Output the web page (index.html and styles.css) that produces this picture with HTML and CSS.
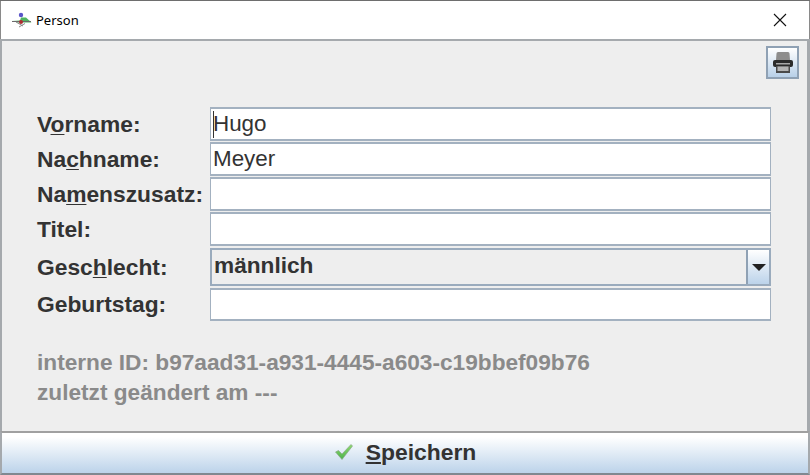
FILE: index.html
```html
<!DOCTYPE html>
<html lang="de">
<head>
<meta charset="utf-8">
<title>Person</title>
<link rel="stylesheet" href="styles.css">
</head>
<body>
<div class="window">
  <header class="titlebar">
    <svg class="app-icon" width="22" height="18" viewBox="0 0 22 18">
      <circle cx="10" cy="4" r="2.200" fill="#5a55c8"/>
      <path d="M1 10 L9 9.500 L10 6.500 L15 6.500 L20.500 11.500 L7 11.500 Z" fill="#4fb45f"/>
      <path d="M1 10.500 H20" stroke="#6a6a6a" stroke-width="1" fill="none"/>
      <path d="M5 11 L12 15 M8 16 L14 12.500" stroke="#8a8a8a" stroke-width="1" fill="none"/>
      <circle cx="10" cy="11" r="2" fill="#b02c30"/>
    </svg>
    <span class="title">Person</span>
    <svg class="close" width="14" height="14" viewBox="0 0 14 14">
      <path d="M1 1 L13 13 M13 1 L1 13" stroke="#111" stroke-width="1.100" fill="none"/>
    </svg>
  </header>
  <main class="content">
    <div class="toolbar">
      <button class="print" type="button" aria-label="Drucken">
        <svg class="print-icon" width="22" height="24" viewBox="0 0 22 24">
          <path d="M4.500 2.500 Q4.500 1 6 1 H16 Q17.500 1 17.500 2.500 L18 9 H4 Z" fill="#8d8d8d"/>
          <rect x="1" y="9" width="20" height="7" rx="2" fill="#2b2b2b"/>
          <rect x="4" y="12" width="14" height="1.500" fill="#a8a8a8"/>
          <path d="M4 15 H18 V22 H4 Z" fill="#4a4a4a"/>
          <rect x="5.500" y="15.500" width="11" height="4.500" fill="#b4b4b4"/>
        </svg>
      </button>
    </div>
    <form class="form">
      <div class="row r1">
        <label class="label">V<u>o</u>rname:</label>
        <div class="field caret-field"><span class="caret"></span>Hugo</div>
      </div>
      <div class="row r2">
        <label class="label">Na<u>c</u>hname:</label>
        <div class="field">Meyer</div>
      </div>
      <div class="row r3">
        <label class="label">Na<u>m</u>enszusatz:</label>
        <div class="field"></div>
      </div>
      <div class="row r4">
        <label class="label">Titel:</label>
        <div class="field"></div>
      </div>
      <div class="row r5">
        <label class="label">Gesc<u>h</u>lecht:</label>
        <div class="combo">
          <div class="combo-value">männlich</div>
          <div class="combo-button"><span class="arrow"></span></div>
        </div>
      </div>
      <div class="row r6">
        <label class="label">Geburtstag:</label>
        <div class="field"></div>
      </div>
    </form>
    <div class="info">
      <div>interne ID: b97aad31-a931-4445-a603-c19bbef09b76</div>
      <div>zuletzt geändert am ---</div>
    </div>
  </main>
  <button class="save" type="button">
    <svg width="20" height="18" viewBox="0 0 20 18">
      <defs>
        <linearGradient id="check" x1="0" y1="0" x2="0" y2="1">
          <stop offset="0" stop-color="#8fdc6c"/>
          <stop offset="1" stop-color="#4cb04c"/>
        </linearGradient>
      </defs>
      <path d="M1.500 9 L4.500 7.500 L8 11 L17 1.500 L18.500 3 L8 16.500 Z" fill="url(#check)" stroke="#8aa68a" stroke-width="0.700"/>
    </svg>
    <span><u>S</u>peichern</span>
  </button>
</div>
</body>
</html>
```
FILE: styles.css
```css
* { box-sizing: border-box; }
html, body { margin: 0; padding: 0; }
body {
  width: 810px;
  height: 475px;
  overflow: hidden;
  font-family: "Liberation Sans", Arial, sans-serif;
  background: #eeeeee;
}
.window {
  width: 810px;
  height: 475px;
  display: flex;
  flex-direction: column;
  border-top: 1px solid #6e6e6e;
}
.titlebar {
  height: 38px;
  flex: none;
  background: #fff;
  display: flex;
  align-items: center;
  padding: 0 22px 0 10px;
  border-left: 1px solid #8a8a8a;
  border-right: 1px solid #8a8a8a;
}
.title {
  font-family: "Noto Sans", "Open Sans", sans-serif;
  font-size: 13px;
  color: #000;
  margin-left: 3px;
  flex: 1;
}
.close { flex: none; }
.content {
  flex: 1;
  min-height: 0;
  background: #eeeeee;
  border-top: 2px solid #a5a9ad;
  border-left: 2px solid #a5a9ad;
  border-right: 3px solid #a5a9ad;
  padding: 5px 9px 0 35px;
}
.toolbar {
  display: flex;
  justify-content: flex-end;
  height: 61px;
  margin-right: -1px;
}
.print {
  width: 33px;
  height: 33px;
  margin: 0;
  padding: 0;
  display: flex;
  align-items: center;
  justify-content: center;
  border: 2px solid #8fa1b4;
  background: linear-gradient(#ffffff, #b8d0e8);
}
.print-icon { filter: blur(0.5px); }
.form { display: block; margin-right: 27px; }
.row {
  display: flex;
  align-items: center;
}
.r1 { height: 34px; margin-bottom: 1px; }
.r2 { height: 34px; margin-bottom: 1px; }
.r3 { height: 34px; margin-bottom: 1px; }
.r4 { height: 34px; margin-bottom: 2px; }
.r5 { height: 38px; margin-bottom: 2px; }
.r6 { height: 33px; }
.label {
  width: 173px;
  flex: none;
  font-size: 22.8px;
  font-weight: 700;
  color: #333333;
}
.label u { text-decoration-thickness: 1px; text-underline-offset: 2px; }
.field {
  flex: 1;
  height: 100%;
  background: #fff;
  border: 2px solid #a3b1c0;
  border-width: 2px 1px 2px 1px;
  font-size: 22.4px;
  color: #333333;
  padding-left: 2px;
  display: flex;
  align-items: center;
}
.caret {
  display: inline-block;
  width: 1px;
  height: 27px;
  margin-right: -1px;
  background: #333;
}
.combo {
  flex: 1;
  height: 100%;
  display: flex;
  border: 2px solid #9aabbd;
}
.combo-value {
  flex: 1;
  background: #eeeeee;
  font-size: 22.67px;
  font-weight: 700;
  color: #333333;
  padding-left: 2px;
  display: flex;
  align-items: center;
  padding-bottom: 3px;
  border-right: 2px solid #8fa1b4;
}
.combo-button {
  width: 21px;
  flex: none;
  background: linear-gradient(#ffffff, #bcd3ea);
  display: flex;
  align-items: center;
  justify-content: center;
}
.arrow {
  width: 0;
  height: 0;
  border-left: 7px solid transparent;
  border-right: 7px solid transparent;
  border-top: 7px solid #222;
}
.info {
  margin-top: 26px;
  font-size: 22.67px;
  font-weight: 700;
  line-height: 30px;
  color: #8a8a8a;
}
.save {
  flex: none;
  width: 100%;
  height: 44px;
  margin: 0;
  padding: 0 0 2px 0;
  display: flex;
  align-items: center;
  justify-content: center;
  gap: 12px;
  font-family: "Liberation Sans", Arial, sans-serif;
  font-size: 22.9px;
  font-weight: 700;
  color: #333333;
  border: 2px solid #a5a9ad;
  border-top: 2px solid #a0a0a0;
  border-bottom-color: #808890;
  background: linear-gradient(#ffffff 10%, #bcd3ea);
}
.save u { text-decoration-thickness: 2px; text-underline-offset: 2px; }
```
